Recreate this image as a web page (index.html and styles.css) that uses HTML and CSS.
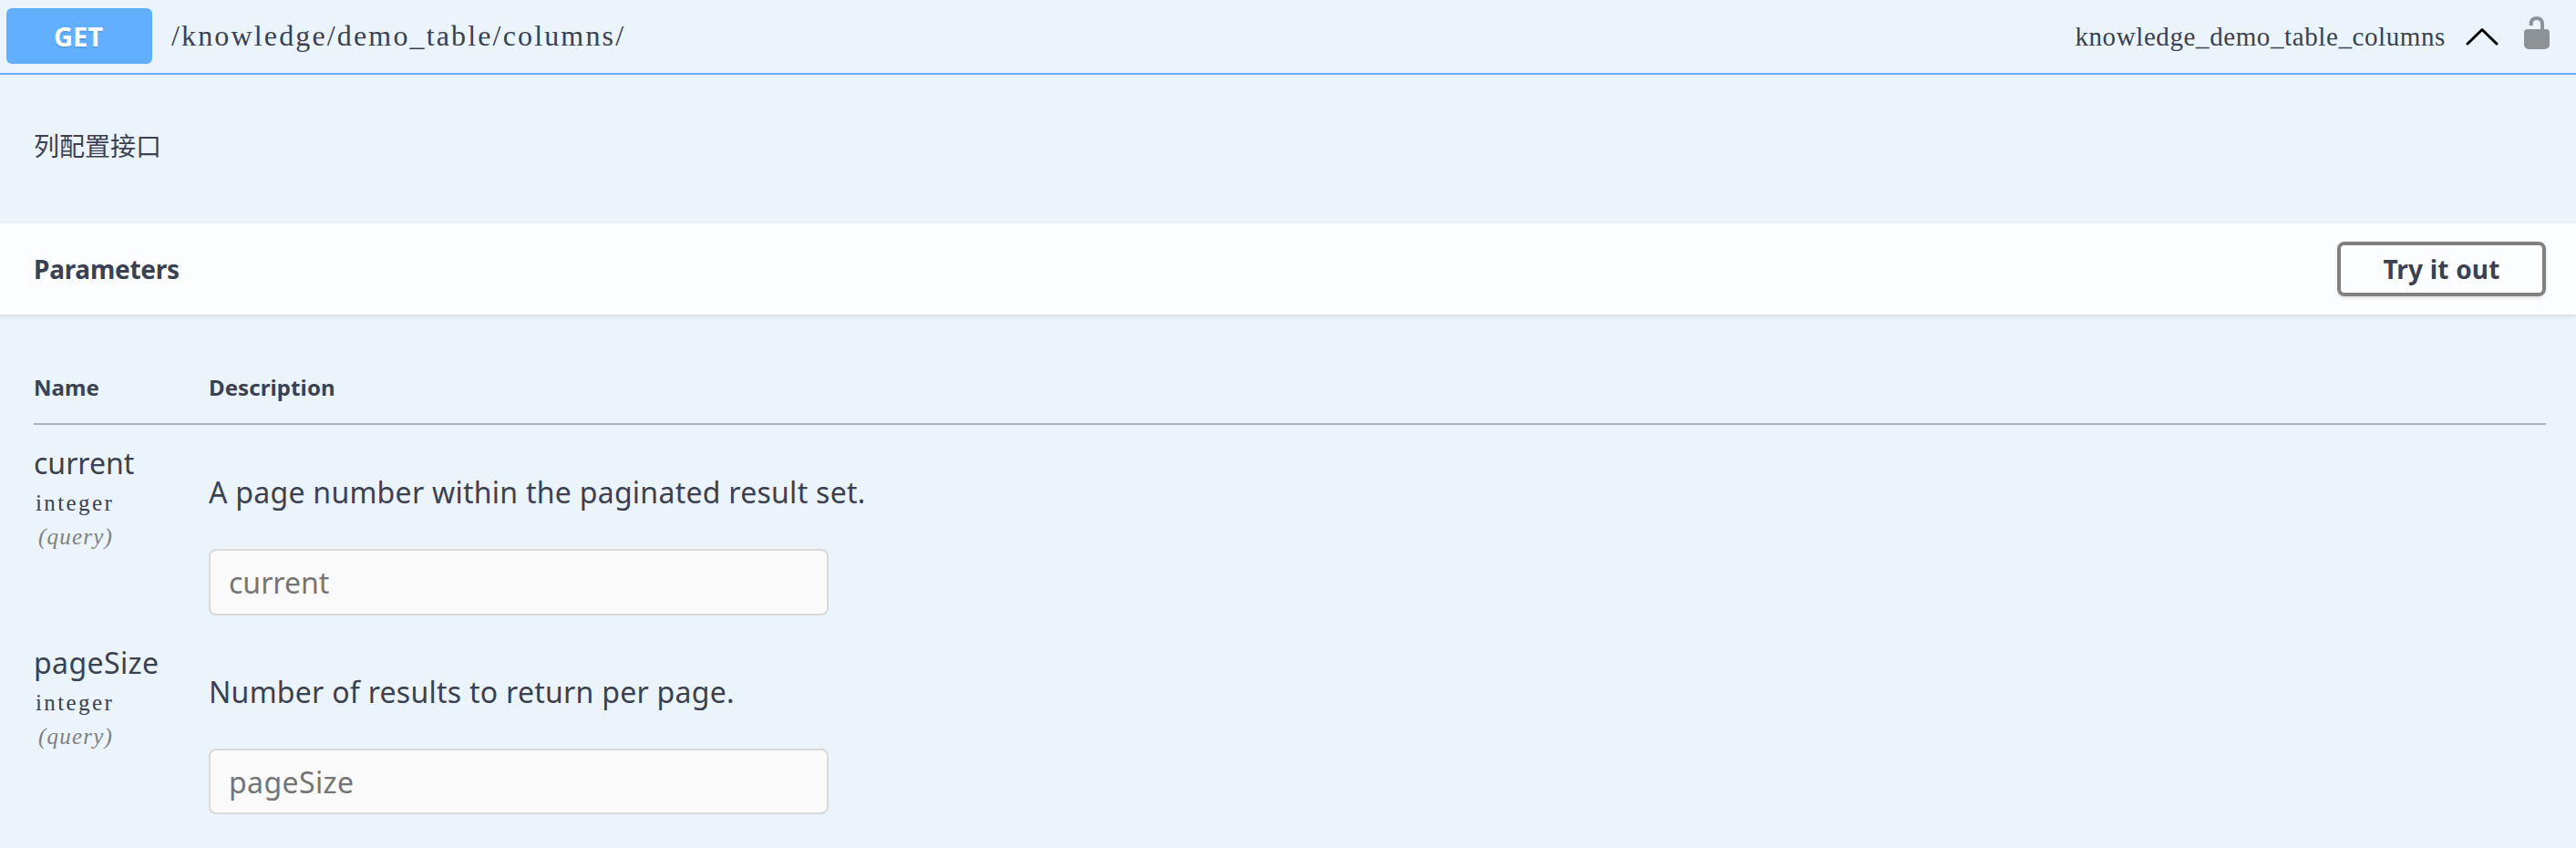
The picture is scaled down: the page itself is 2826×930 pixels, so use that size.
FILE: index.html
```html
<!DOCTYPE html>
<html lang="en">
<head>
<meta charset="utf-8">
<title>knowledge_demo_table_columns</title>
<link rel="stylesheet" href="styles.css">
</head>
<body>
<main class="opblock">
  <header class="summary">
    <span class="method">GET</span>
    <span class="path">/knowledge/demo_table/columns/</span>
    <span class="operation-id">knowledge_demo_table_columns</span>
    <svg class="chevron" viewBox="0 0 36 20" width="36" height="20"><path d="M2 18 18 2.5 34 18" fill="none" stroke="#000" stroke-width="3" stroke-linecap="round" stroke-linejoin="round"/></svg>
    <svg class="lock" viewBox="0 0 28 36" width="28" height="36"><path d="M5.7 10V7.5C5.7 3 9 0 13.8 0S22 3 22 7.5V14H24Q28 14 28 18V31Q28 36 21 36H7Q0 36 0 31V18Q0 14 4 14H18V8C18 5.500 16.500 4 13.800 4S9.700 5.500 9.700 8V10Z" fill="#8d9296"/></svg>
  </header>
  <p class="description">列配置接口</p>
  <div class="section-header">
    <h4 class="section-title">Parameters</h4>
    <button class="try-out">Try it out</button>
  </div>
  <div class="parameters">
    <div class="row head"><span>Name</span><span>Description</span></div>
    <div class="row">
      <div class="name-cell">
        <div class="name">current</div>
        <div class="type">integer</div>
        <div class="location">(query)</div>
      </div>
      <div class="desc-cell">
        <p class="desc">A page number within the paginated result set.</p>
        <input class="field" type="text" placeholder="current">
      </div>
    </div>
    <div class="row">
      <div class="name-cell">
        <div class="name wide">pageSize</div>
        <div class="type">integer</div>
        <div class="location">(query)</div>
      </div>
      <div class="desc-cell">
        <p class="desc">Number of results to return per page.</p>
        <input class="field short wide" type="text" placeholder="pageSize">
      </div>
    </div>
  </div>
</main>
</body>
</html>
```
FILE: styles.css
```css
* { box-sizing: border-box; }
body {
  margin: 0;
  background: #ebf3fb;
  color: #3b4151;
  font-family: "Noto Sans", "Noto Sans CJK SC", sans-serif;
}
.opblock { height: 930px; overflow: hidden; }
.summary {
  display: flex;
  align-items: center;
  height: 82px;
  padding: 0 29px 0 7px;
  border-bottom: 2px solid #61affe;
}
.method {
  width: 160px;
  height: 61px;
  margin-top: -1px;
  padding-right: 2px;
  border-radius: 6px;
  background: #61affe;
  color: #fff;
  font-size: 29px;
  font-weight: 700;
  line-height: 62px;
  text-align: center;
  text-shadow: 0 2px 0 rgba(0, 0, 0, .1);
}
.path, .operation-id, .type, .location {
  font-family: "Liberation Serif", serif;
  white-space: nowrap;
}
.path { flex: 1; margin: -2px 0 0 21px; font-size: 32px; line-height: 40px; letter-spacing: 2.15px; }
.operation-id { font-size: 29px; line-height: 40px; letter-spacing: .6px; }
.chevron { margin-left: 22px; }
.lock { margin: -8px 0 0 28px; }
.description {
  height: 163px;
  margin: 0;
  padding: 58px 0 0 37px;
  font-size: 28px;
  line-height: 40px;
}
.section-header {
  display: flex;
  align-items: center;
  justify-content: space-between;
  height: 100px;
  padding: 0 33px 0 37px;
  background: #fcfdff;
  box-shadow: 0 2px 4px rgba(0, 0, 0, .1);
}
.section-title { margin: 0; font-size: 28px; line-height: 40px; letter-spacing: -.25px; }
.try-out {
  width: 229px;
  height: 60px;
  padding: 0;
  border: 4px solid #808080;
  border-radius: 8px;
  background: transparent;
  box-shadow: 0 2px 4px rgba(0, 0, 0, .1);
  color: #3b4151;
  font: 700 28px/40px "Noto Sans", sans-serif;
  letter-spacing: .2px;
}
.parameters { padding: 0 33px 0 37px; }
.row { display: grid; grid-template-columns: 192px 1fr; height: 219px; }
.head {
  height: 121px;
  padding-top: 60px;
  border-bottom: 2px solid #a9b1bd;
  font-size: 24px;
  font-weight: 700;
  line-height: 40px;
  letter-spacing: .1px;
}
.name-cell { padding-top: 22px; }
.name { font-size: 32px; line-height: 40px; }
.type { margin: 6px 0 0 2px; font-size: 25px; line-height: 36px; letter-spacing: 2.4px; }
.location { margin: 1px 0 0 5px; font-size: 25px; font-style: italic; line-height: 36px; letter-spacing: 1.2px; color: #808080; }
.desc-cell { padding-top: 54px; }
.desc { margin: 0; font-size: 32px; line-height: 40px; letter-spacing: .27px; white-space: nowrap; }
.field {
  display: block;
  width: 680px;
  height: 73px;
  margin-top: 42px;
  padding: 0 20px;
  border: 2px solid #d9d9d9;
  border-radius: 8px;
  background: #fafafa;
  font: 32px/40px "Noto Sans", sans-serif;
}
.field.short { height: 72px; }
.wide { letter-spacing: .4px; }
.field::placeholder { color: #757575; }
```
